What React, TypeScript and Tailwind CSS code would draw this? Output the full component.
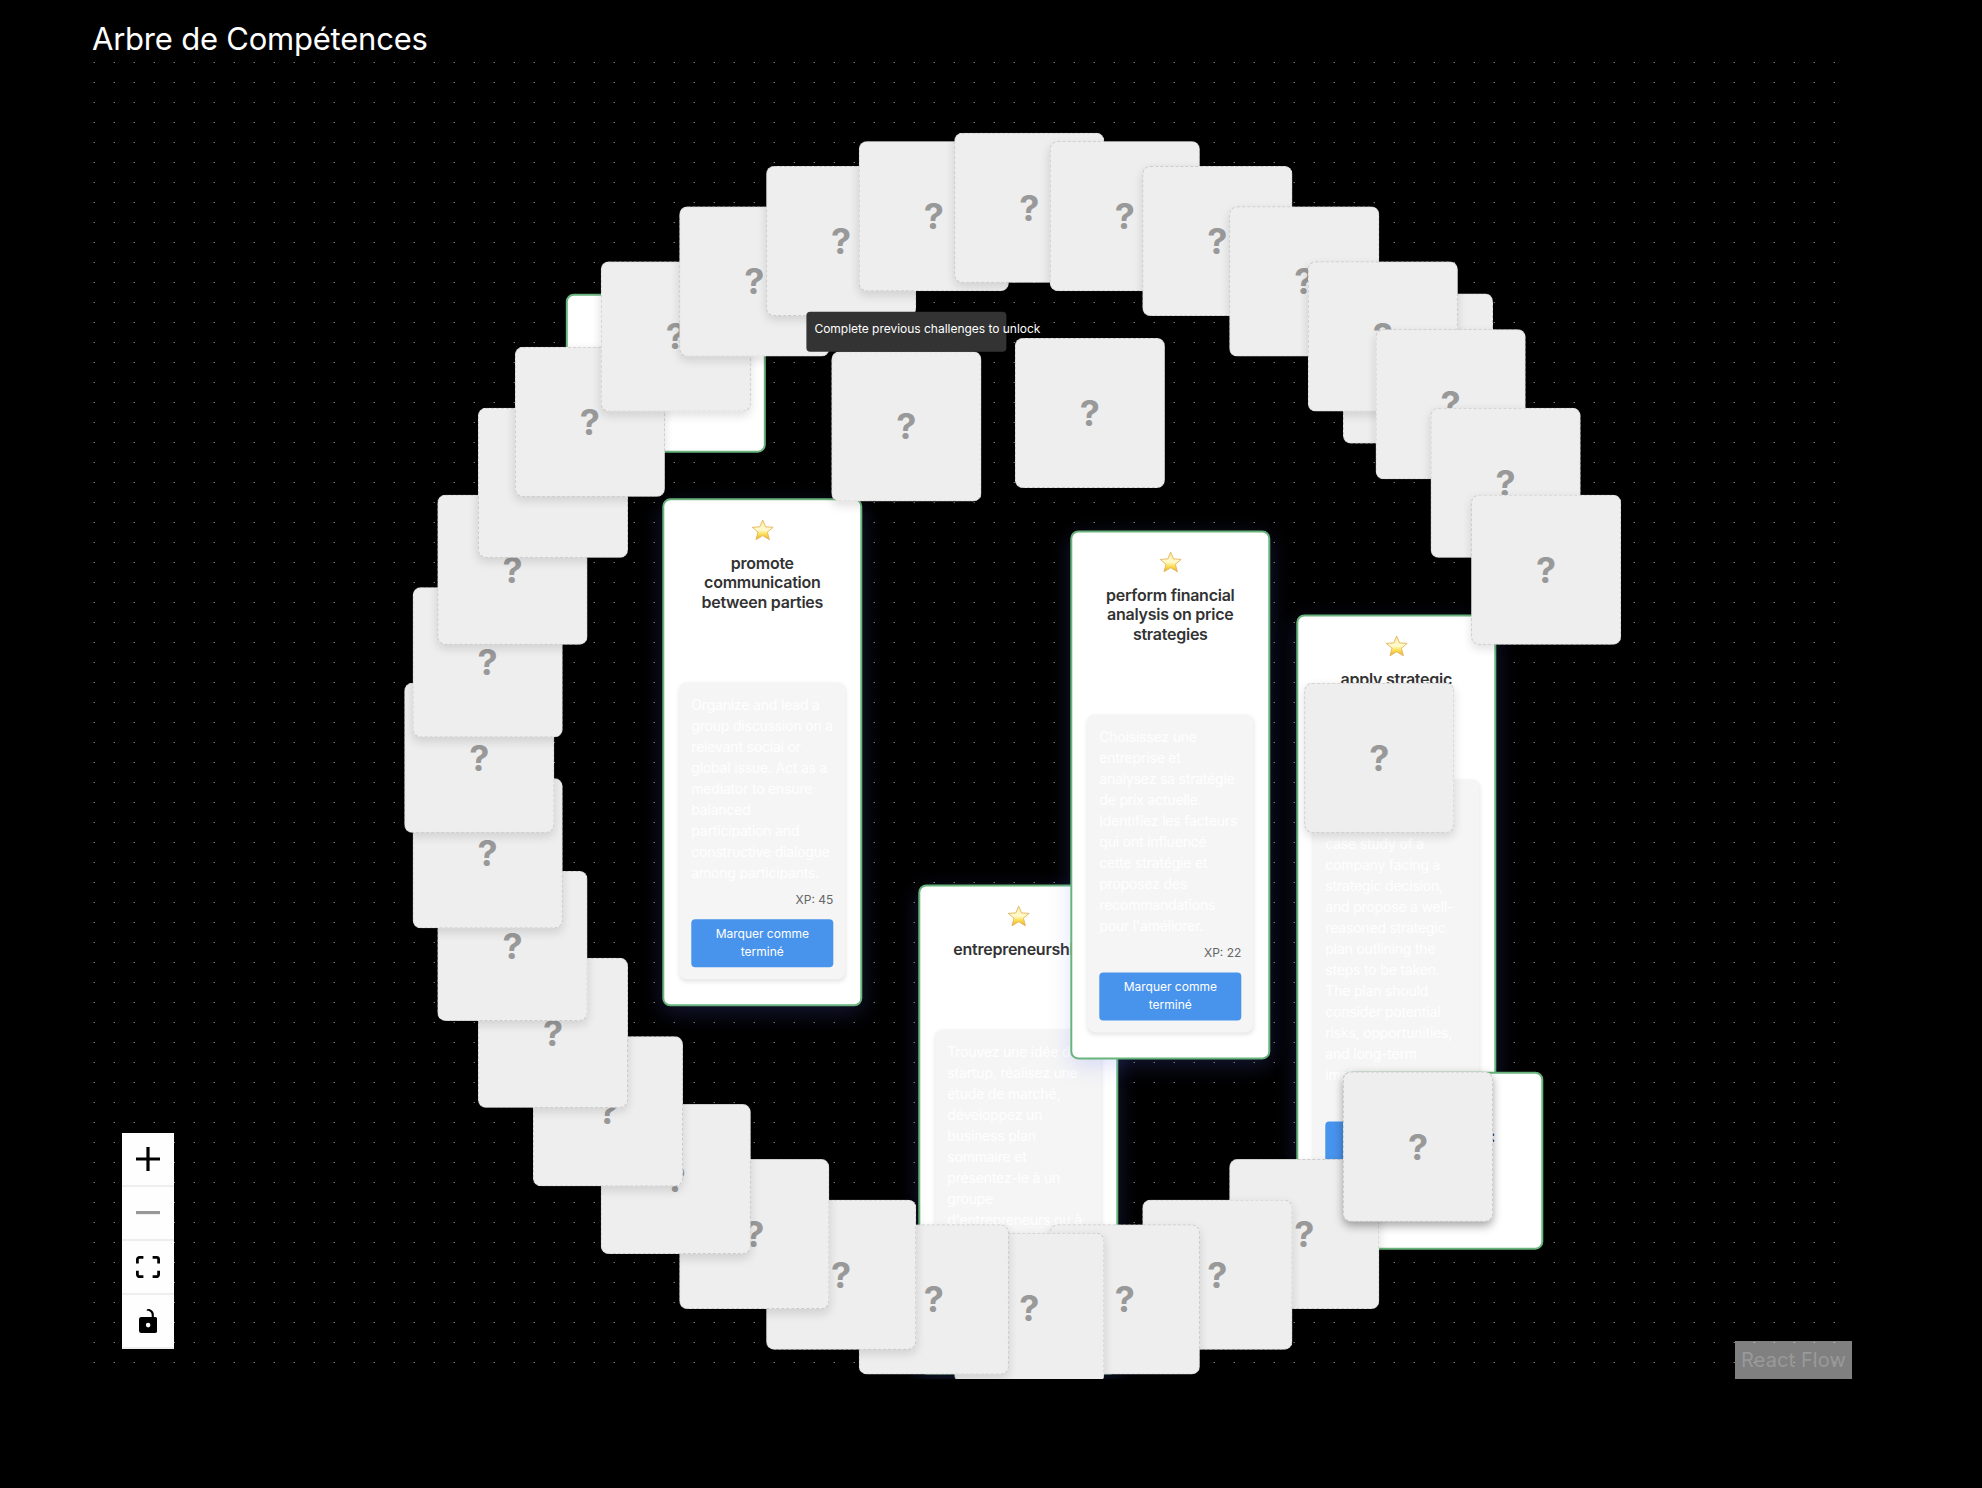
import React from "react";

type Point = { x: number; y: number };

const RING_CENTER: Point = { x: 862.3, y: 623.8 };
const RING_RADIUS = 550;
const RING_ANGLES = Array.from({ length: 29 }, (_, i) => 60 + i * 10);

// Nodes dragged away from their computed ring position.
const MOVED: Record<number, Point> = { 220: { x: 422.9, y: 287.8 } };

const at = ({ x, y }: Point): React.CSSProperties => ({ transform: `translate(${x}px, ${y}px)` });

function onRing(angle: number): Point {
  const rad = (angle * Math.PI) / 180;
  return (
    MOVED[angle] ?? {
      x: RING_CENTER.x + RING_RADIUS * Math.cos(rad),
      y: RING_CENTER.y + RING_RADIUS * Math.sin(rad),
    }
  );
}

function LockedNode({ pos, raised = false }: { pos: Point; raised?: boolean }) {
  return (
    <div
      style={at(pos)}
      className={
        "absolute left-0 top-0 flex size-[150px] items-center justify-center rounded-lg border border-dashed border-[#ccc] bg-[#eee] pt-[0.5px] " +
        (raised ? "shadow-[0_4px_10px_rgba(0,0,0,0.35)]" : "shadow-[0_4px_10px_rgba(0,0,0,0.12)]")
      }
    >
      <span className="text-[36px] font-bold leading-none text-[#999]">?</span>
    </div>
  );
}

function Star() {
  return (
    <svg viewBox="0 0 22 21" className="h-[21px] w-[22px] -translate-y-[0.8px] translate-x-[0.4px]">
      <defs>
        <linearGradient id="star-fill" x1="0" y1="0" x2="0" y2="1">
          <stop offset="0" stopColor="#fbeaa0" />
          <stop offset="0.5" stopColor="#fffbd0" />
          <stop offset="0.72" stopColor="#fbdf55" />
          <stop offset="1" stopColor="#eca92c" />
        </linearGradient>
      </defs>
      <path
        d="M11 .5l2.9 6.8 7.6.5-5.8 4.8 2 7.6L11 16.1l-6.7 4.1 2-7.6L.5 7.8l7.6-.5z"
        fill="url(#star-fill)"
        stroke="#e3b45c"
        strokeWidth="0.9"
        strokeLinejoin="round"
      />
    </svg>
  );
}

function ChallengeNode({ pos, title, text, xp }: { pos: Point; title: string; text: string; xp: number }) {
  return (
    <div
      style={at(pos)}
      className="absolute left-0 top-0 flex w-[200px] flex-col items-center rounded-lg border-2 border-[#68b47c] bg-white px-[15px] pb-[25px] pt-[19.5px] shadow-[0_6px_22px_rgba(100,115,255,0.2)]"
    >
      <Star />
      <h3 className="mb-[70px] mt-[13.5px] w-[136px] text-center text-[16px] font-semibold leading-[19.4px] tracking-[-0.25px] text-[#333]">
        {title}
      </h3>
      <div className="flex w-full flex-col rounded-lg bg-[#f5f5f5] p-3 shadow-[0_2px_4px_rgba(0,0,0,0.1)]">
        <p className="text-[14px] leading-[21px] tracking-[-0.19px] text-white/90">{text}</p>
        <div className="mt-2 text-right text-[12px] leading-[18px] text-[#666]">XP: {xp}</div>
        <button className="mt-[10px] h-12 rounded-sm bg-[#4893ec] px-3 text-[12px] leading-[18px] text-white">
          Marquer comme terminé
        </button>
      </div>
    </div>
  );
}

function CompletedNode({ pos, height, label }: { pos: Point; height: number; label?: string }) {
  return (
    <div
      style={{ ...at(pos), height }}
      className="absolute left-0 top-0 w-[200px] rounded-lg border-2 border-[#68b47c] bg-white px-[46px] pt-[53px] text-right text-[16px] font-semibold leading-[19px] text-[#333]"
    >
      {label}
    </div>
  );
}

function Tooltip({ pos, text }: { pos: Point; text: string }) {
  return (
    <div
      style={at(pos)}
      className="absolute left-0 top-0 h-10 w-[200px] whitespace-nowrap rounded bg-[#333] p-2 text-[12px] leading-[18px] tracking-[-0.02px] text-white"
    >
      {text}
    </div>
  );
}

function DotGrid() {
  return (
    <svg className="absolute inset-0 size-full">
      <defs>
        <pattern id="dots" x="1" y="3" width="20" height="20" patternUnits="userSpaceOnUse">
          <rect x="0" y="0" width="1" height="1" fill="#2b2b2b" />
          <rect x="1" y="0" width="1" height="1" fill="#7d7d7d" />
        </pattern>
      </defs>
      <rect width="100%" height="100%" fill="url(#dots)" />
    </svg>
  );
}

const CONTROLS = [
  {
    name: "zoom in",
    viewBox: "0 0 32 32",
    d: "M32 18.133H18.133V32h-4.266V18.133H0v-4.266h13.867V0h4.266v13.867H32z",
    size: "h-6 w-6",
  },
  { name: "zoom out", viewBox: "0 0 32 5", d: "M0 0h32v4.2H0z", size: "h-[3.75px] w-6 opacity-40" },
  {
    name: "fit view",
    viewBox: "0 0 32 30",
    d: "M3.692 4.63c0-.53.4-.938.939-.938h5.215V0H4.708C2.13 0 0 2.054 0 4.63v5.216h3.692V4.631zM27.354 0h-5.2v3.692h5.17c.53 0 .984.4.984.939v5.215H32V4.631A4.624 4.624 0 0027.354 0zm.954 24.83c0 .532-.4.94-.939.94h-5.215v3.768h5.215c2.577 0 4.631-2.13 4.631-4.707v-5.139h-3.692v5.139zm-23.677.94c-.531 0-.939-.4-.939-.94v-5.138H0v5.139c0 2.577 2.13 4.707 4.708 4.707h5.138V25.77H4.631z",
    size: "h-[22.5px] w-6",
  },
  {
    name: "toggle interactivity",
    viewBox: "0 0 25 32",
    d: "M21.333 10.667H19.81V7.619C19.81 3.429 16.38 0 12.19 0c-4.114 1.828-1.37 2.133.305 2.438 1.676.305 4.42 2.59 4.42 5.181v3.048H3.047A3.056 3.056 0 000 13.714v15.238A3.056 3.056 0 003.048 32h18.285a3.056 3.056 0 003.048-3.048V13.714a3.056 3.056 0 00-3.048-3.047zM12.19 24.533a3.056 3.056 0 01-3.047-3.047 3.056 3.056 0 013.047-3.048 3.056 3.056 0 013.048 3.048 3.056 3.056 0 01-3.048 3.047z",
    size: "h-6 w-[18.75px]",
  },
];

function Controls() {
  return (
    <div className="absolute bottom-[30px] left-[30px] flex w-[52px] flex-col">
      {CONTROLS.map((c) => (
        <button
          key={c.name}
          aria-label={c.name}
          className="flex h-[54px] items-center justify-center border-b-2 border-[#eee] bg-[#fefefe]"
        >
          <svg viewBox={c.viewBox} className={c.size} fill="#000">
            <path d={c.d} />
          </svg>
        </button>
      ))}
    </div>
  );
}

export default function App() {
  return (
    <div className="flex h-[1488px] w-[1982px] flex-col bg-black pl-[92px] font-['Inter',sans-serif]">
      <h1 className="flex h-[59px] items-end pb-px text-[31px] leading-[38px] text-white">
        <span className="tracking-[-0.22px]">Arbre de Compétences</span>
      </h1>
      <main className="relative h-[1320px] w-[1760px] overflow-hidden">
        <DotGrid />

        <CompletedNode pos={{ x: 473.8, y: 234.7 }} height={158.6} />
        <LockedNode pos={{ x: 1251, y: 234.5 }} />
        <ChallengeNode
          pos={{ x: 570.3, y: 439.3 }}
          title="promote communication between parties"
          text="Organize and lead a group discussion on a relevant social or global issue. Act as a mediator to ensure balanced participation and constructive dialogue among participants."
          xp={45}
        />
        <ChallengeNode
          pos={{ x: 826.3, y: 825.4 }}
          title="entrepreneurship"
          text="Trouvez une idée de startup, réalisez une étude de marché, développez un business plan sommaire et présentez-le à un groupe d'entrepreneurs ou à des investisseurs."
          xp={40}
        />
        <ChallengeNode
          pos={{ x: 978.3, y: 471.4 }}
          title="perform financial analysis on price strategies"
          text="Choisissez une entreprise et analysez sa stratégie de prix actuelle. Identifiez les facteurs qui ont influencé cette stratégie et proposez des recommandations pour l'améliorer."
          xp={22}
        />
        <ChallengeNode
          pos={{ x: 1204.3, y: 555.4 }}
          title="apply strategic thinking"
          text={
            "Analyze a relevant and\u00a0comprehensive case study of a company facing a strategic decision, and propose a well-reasoned strategic plan outlining the steps to be taken. The plan should consider potential risks, opportunities, and long-term implications."
          }
          xp={50}
        />
        <CompletedNode pos={{ x: 1251.3, y: 1012.7 }} height={178.3} label=":" />
        <LockedNode pos={{ x: 1212.3, y: 623.8 }} />
        <LockedNode pos={{ x: 922.9, y: 279 }} />
        <LockedNode pos={{ x: 739.4, y: 292.4 }} />

        {RING_ANGLES.map((angle) => (
          <LockedNode key={angle} pos={onRing(angle)} />
        ))}
        <LockedNode pos={{ x: 1251, y: 1012.7 }} raised />
        <Tooltip pos={{ x: 714.4, y: 252.8 }} text="Complete previous challenges to unlock" />

        <Controls />
        <div className="absolute bottom-0 right-0 flex h-[38px] w-[117px] items-center justify-center bg-white/50 text-[20px] leading-[30px] tracking-[0.1px] text-[#999]">
          React Flow
        </div>
      </main>
    </div>
  );
}
